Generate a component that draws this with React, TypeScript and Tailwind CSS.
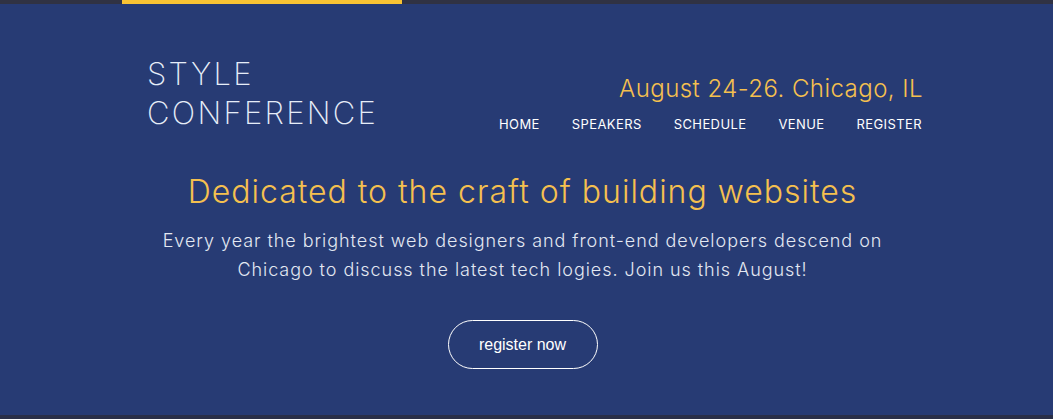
export default function App() {
  const nav = ["HOME", "SPEAKERS", "SCHEDULE", "VENUE", "REGISTER"];
  return (
    <div
      className="w-[1053px] h-[419px] bg-[#273b74] flex flex-col overflow-hidden"
      style={{ fontFamily: "Inter, 'Open Sans', sans-serif" }}
    >
      <div className="h-[4px] bg-[#303243] flex shrink-0">
        <div className="ml-[122px] w-[280px] bg-[#f9c333]" />
      </div>

      <header className="ml-[147px] w-[775px] mt-[50px] flex justify-between items-end">
        <h1 className="text-[31px] leading-[39px] font-extralight text-[#e6edf8] tracking-[2.3px]">
          STYLE
          <br />
          CONFERENCE
        </h1>
        <div className="flex flex-col items-end">
          <p className="text-[24px] leading-[30px] font-light text-[#f5c04f] tracking-[0.45px] -mr-[1px]">
            August 24-26. Chicago, IL
          </p>
          <nav className="mt-[12px] flex gap-[32px] text-[13px] leading-[16px] text-white tracking-[0.4px]">
            {nav.map((n) => (
              <a key={n} href="#">
                {n}
              </a>
            ))}
          </nav>
        </div>
      </header>

      <section className="mt-[40px] pr-[8px] flex flex-col items-center text-center">
        <h2 className="text-[32px] leading-[40px] font-light text-[#f5c04f] tracking-[1px]">
          Dedicated to the craft of building websites
        </h2>
        <p className="mt-[14px] w-[760px] text-[18px] leading-[29px] font-light text-[#e3e8f2] tracking-[0.95px]">
          Every year the brightest web designers and front-end developers descend on
          <br />
          Chicago to discuss the latest tech logies. Join us this August!
        </p>
        <button
          className="mt-[36px] w-[150px] h-[49px] rounded-full border border-white text-white text-[16px]"
          style={{ fontFamily: "'Liberation Sans', Arial, sans-serif" }}
        >
          register now
        </button>
      </section>

      <div className="mt-auto h-[4px] bg-[#2a2f48] shrink-0" />
    </div>
  );
}
